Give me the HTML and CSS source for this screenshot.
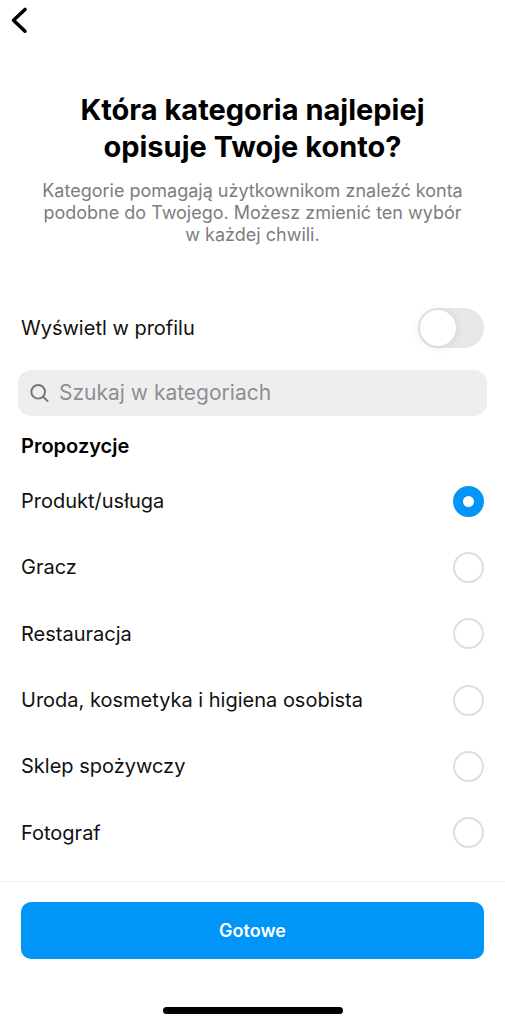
FILE: index.html
```html
<!DOCTYPE html>
<html lang="pl">
<head>
<meta charset="utf-8">
<meta name="viewport" content="width=device-width, initial-scale=1">
<title>Kategoria konta</title>
<link rel="stylesheet" href="styles.css">
</head>
<body>
<div class="page">
  <header class="topbar">
    <button class="back" type="button" aria-label="Wstecz">
      <svg class="back-icon" viewBox="0 0 40 40" aria-hidden="true"><path d="M25 9.5 13.5 20.2 25 31.2"/></svg>
    </button>
  </header>
  <main class="content">
    <div class="intro">
      <h1 class="title">Która kategoria najlepiej<br>opisuje Twoje konto?</h1>
      <p class="subtitle">Kategorie pomagają użytkownikom znaleźć konta<br>podobne do Twojego. Możesz zmienić ten wybór<br>w każdej chwili.</p>
    </div>
    <label class="row switch-row">
      <span>Wyświetl w profilu</span>
      <input class="switch" type="checkbox" role="switch">
    </label>
    <label class="search">
      <svg class="search-icon" viewBox="0 0 20 20" aria-hidden="true"><circle cx="8.6" cy="8.2" r="7.2"/><path d="m13.8 13.4 4.8 4.6"/></svg>
      <input class="search-input" type="search" placeholder="Szukaj w kategoriach" aria-label="Szukaj w kategoriach">
    </label>
    <h2 class="heading">Propozycje</h2>
    <div class="options" role="radiogroup" aria-label="Propozycje">
      <label class="row option"><span>Produkt/usługa</span><input class="radio" type="radio" name="category" checked></label>
      <label class="row option"><span>Gracz</span><input class="radio" type="radio" name="category"></label>
      <label class="row option"><span>Restauracja</span><input class="radio" type="radio" name="category"></label>
      <label class="row option"><span>Uroda, kosmetyka i higiena osobista</span><input class="radio" type="radio" name="category"></label>
      <label class="row option"><span>Sklep spożywczy</span><input class="radio" type="radio" name="category"></label>
      <label class="row option"><span>Fotograf</span><input class="radio" type="radio" name="category"></label>
    </div>
  </main>
  <footer class="footer">
    <button class="done" type="button">Gotowe</button>
    <div class="home-bar"></div>
  </footer>
</div>
</body>
</html>
```
FILE: styles.css
```css
* {
  box-sizing: border-box;
}

body {
  margin: 0;
  background: #fff;
  color: #111;
  font-family: Inter, "Liberation Sans", sans-serif;
  font-size: 20px;
  line-height: 24px;
}

.page {
  display: flex;
  flex-direction: column;
  min-height: 100vh;
}

.back {
  display: block;
  padding: 0;
  border: 0;
  background: none;
}

.back-icon {
  display: block;
  width: 40px;
  height: 40px;
  fill: none;
  stroke: #000;
  stroke-width: 3.6;
  stroke-linecap: round;
  stroke-linejoin: round;
}

.content {
  display: flex;
  flex: 1;
  flex-direction: column;
  padding: 51px 0 15px;
}

.intro {
  padding: 0 21px;
  text-align: center;
}

.title {
  margin: 0;
  color: #000;
  font-size: 29px;
  font-weight: 700;
  line-height: 37px;
}

.subtitle {
  margin: 15px 0 0;
  color: #7d7d7d;
  font-size: 18px;
  line-height: 22px;
}

.row {
  display: flex;
  align-items: center;
  justify-content: space-between;
  padding: 0 21px;
}

.switch-row {
  margin-top: 62px;
}

.switch {
  display: flex;
  align-items: center;
  width: 66px;
  height: 40px;
  margin: 0;
  padding: 2px;
  border-radius: 20px;
  background: #e8e8e8;
  appearance: none;
}

.switch::before {
  width: 36px;
  height: 36px;
  border-radius: 50%;
  background: #fff;
  box-shadow: 0 1px 8px rgb(0 0 0 / 12%);
  content: "";
}

.switch:checked {
  justify-content: flex-end;
  background: #0095f6;
}

.search {
  display: flex;
  align-items: center;
  gap: 10px;
  height: 46px;
  margin: 22px 18px 0;
  padding: 0 12px;
  border-radius: 13px;
  background: #eee;
}

.search-icon {
  width: 19px;
  height: 19px;
  fill: none;
  stroke: #747478;
  stroke-width: 2;
  stroke-linecap: round;
}

.search-input {
  flex: 1;
  min-width: 0;
  padding: 0;
  border: 0;
  outline: 0;
  background: none;
  color: #111;
  font: inherit;
  font-size: 21px;
  appearance: none;
}

.search-input::placeholder {
  color: #8e8e93;
}

.heading {
  margin: 18px 21px 10px;
  color: #000;
  font-size: 20px;
  font-weight: 600;
  line-height: 24px;
}

.options {
  display: flex;
  flex: 1;
  flex-direction: column;
}

.option {
  flex: 1;
  min-height: 48px;
}

.radio {
  flex: none;
  width: 31px;
  height: 31px;
  margin: 0;
  border: 2px solid #dbdfe1;
  border-radius: 50%;
  background: #fff;
  appearance: none;
}

.radio:checked {
  border: 10px solid #0095f6;
}

.footer {
  display: flex;
  flex-direction: column;
  padding: 20px 21px 10px;
  border-top: 1px solid #eee;
}

.done {
  height: 57px;
  border: 0;
  border-radius: 10px;
  background: #0095f6;
  color: #fff;
  font: inherit;
  font-size: 18px;
  font-weight: 600;
}

.home-bar {
  align-self: center;
  width: 180px;
  height: 7px;
  margin-top: 48px;
  border-radius: 4px;
  background: #000;
}
```
